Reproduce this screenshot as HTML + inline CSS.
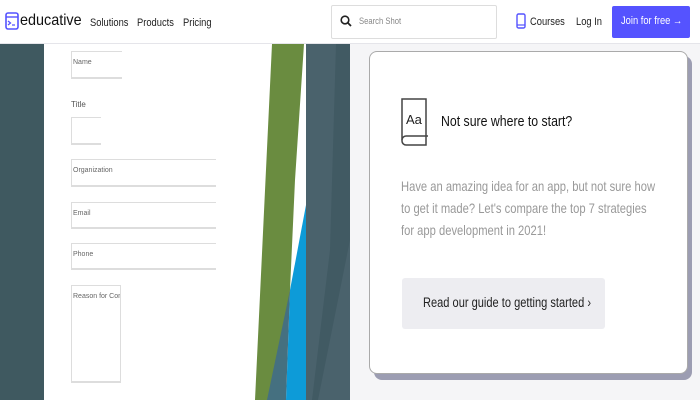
<!DOCTYPE html>
<html><head><style>
*{margin:0;padding:0;box-sizing:border-box}
body{width:700px;height:400px;overflow:hidden;font-family:"Liberation Sans",sans-serif;background:#f5f5f7;position:relative}
.hdr{position:absolute;left:0;top:0;width:700px;height:44px;background:#fff;border-bottom:1px solid #e5e5ea;z-index:5}
.hdr span{position:absolute;font-size:11px;color:#222;transform:scaleX(.85);transform-origin:left;white-space:nowrap}
.field{position:absolute;background:#fff;border-top:1px solid #ddd;border-bottom:2px solid #ddd;border-left:1px solid #ddd;font-size:7px;color:#666;padding:7px 1px;white-space:nowrap;overflow:hidden}
.c{transform:scaleX(.82);transform-origin:left;white-space:nowrap}
</style></head><body>
<div class="hdr">
 <svg style="position:absolute;left:5px;top:12px" width="14" height="18" viewBox="0 0 14 18"><rect x="1" y="1" width="12" height="16" rx="2" fill="none" stroke="#5553ff" stroke-width="1.6"/><line x1="1" y1="5" x2="13" y2="5" stroke="#5553ff" stroke-width="1.4"/><path d="M3 9l2.5 2L3 13M7 13h3" fill="none" stroke="#5553ff" stroke-width="1.3"/></svg>
 <span style="left:20px;top:12px;font-size:16px;color:#111;transform:scaleX(.9)">educative</span>
 <span style="left:90px;top:17px">Solutions</span>
 <span style="left:137px;top:17px">Products</span>
 <span style="left:183px;top:17px">Pricing</span>
 <div style="position:absolute;left:331px;top:5px;width:166px;height:34px;border:1px solid #ddd;border-radius:2px"></div>
 <svg style="position:absolute;left:340px;top:15px" width="12" height="12" viewBox="0 0 12 12"><circle cx="5" cy="5" r="3.8" fill="none" stroke="#222" stroke-width="1.6"/><line x1="8" y1="8" x2="11" y2="11" stroke="#222" stroke-width="1.8"/></svg>
 <span style="left:359px;top:16px;font-size:9px;color:#888">Search Shot</span>
 <svg style="position:absolute;left:516px;top:13px" width="10" height="16" viewBox="0 0 10 16"><rect x="1" y="1" width="8" height="14" rx="1.5" fill="none" stroke="#5553ff" stroke-width="1.4"/><line x1="1" y1="12" x2="9" y2="12" stroke="#5553ff" stroke-width="1.2"/></svg>
 <span style="left:530px;top:16px">Courses</span>
 <span style="left:576px;top:16px">Log In</span>
 <div style="position:absolute;left:612px;top:6px;width:78px;height:32px;background:#5553ff;border-radius:2px"></div>
 <span style="left:621px;top:15px;color:#fff;font-size:11px">Join for free →</span>
</div>
<div style="position:absolute;left:0;top:44px;width:350px;height:356px;background:#3f5960"></div>
<div style="position:absolute;left:44px;top:44px;width:262px;height:356px;background:#fff"></div>
<svg style="position:absolute;left:0;top:44px" width="350" height="356" viewBox="0 44 350 356">
 <polygon points="306,44 350,44 350,400 306,400" fill="#4a626c"/>
 <polygon points="336,44 350,44 350,240 318,400 312,400 330,250" fill="#415a63"/>
 <polygon points="272,44 304,44 295,180 285,400 255,400" fill="#6a8c40"/>
 <polygon points="306,205 306,400 286,400 290,290" fill="#0d9bd8"/>
 <polygon points="290,290 286,400 267,400" fill="#457080"/>
</svg>
<div class="field" style="left:71px;top:51px;width:51px;height:28px">Name</div>
<div style="position:absolute;left:71px;top:100px;font-size:8px;color:#555">Title</div>
<div class="field" style="left:71px;top:117px;width:30px;height:28px"></div>
<div class="field" style="left:71px;top:159px;width:145px;height:28px">Organization</div>
<div class="field" style="left:71px;top:202px;width:145px;height:27px">Email</div>
<div class="field" style="left:71px;top:243px;width:145px;height:27px">Phone</div>
<div class="field" style="left:71px;top:285px;width:50px;height:98px;border-right:1px solid #ddd">Reason for Contact</div>
<div style="position:absolute;left:374px;top:56px;width:318px;height:324px;background:#9c9db2;border-radius:8px"></div>
<div style="position:absolute;left:369px;top:51px;width:319px;height:323px;background:#fff;border:1px solid #aaa;border-radius:8px"></div>
<svg style="position:absolute;left:401px;top:96px" width="28" height="52" viewBox="0 0 28 52"><path d="M1 3h24v46H5a4 4 0 0 1-4-4z" fill="#fff" stroke="#444" stroke-width="1.5"/><path d="M1 44a4 4 0 0 1 4-4h22" fill="none" stroke="#444" stroke-width="1.5"/><text x="5" y="28" font-family="Liberation Sans" font-size="13" fill="#222">Aa</text></svg>
<div class="c" style="position:absolute;left:441px;top:113px;font-size:15px;color:#111">Not sure where to start?</div>
<div style="position:absolute;left:401px;top:175px;width:322px;font-size:14px;line-height:22px;color:#999;transform:scaleX(.8);transform-origin:left">Have an amazing idea for an app, but not sure how to get it made? Let's compare the top 7 strategies for app development in 2021!</div>
<div style="position:absolute;left:402px;top:278px;width:203px;height:51px;background:#ededf1;border-radius:3px"></div>
<div class="c" style="position:absolute;left:423px;top:295px;font-size:13.5px;color:#222">Read our guide to getting started ›</div>
</body></html>
